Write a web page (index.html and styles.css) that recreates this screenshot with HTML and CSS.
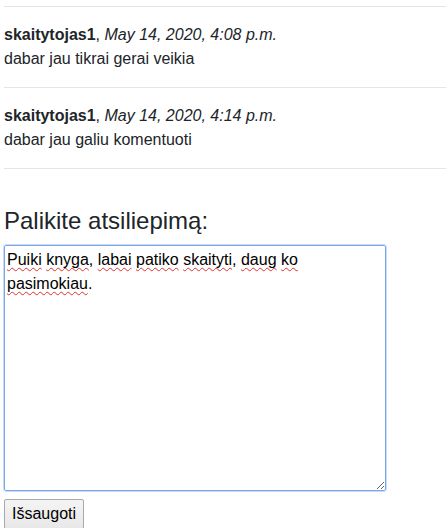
FILE: index.html
```html
<!DOCTYPE html>
<html lang="lt">
<head>
<meta charset="utf-8">
<title>Atsiliepimai</title>
<link rel="stylesheet" href="styles.css">
</head>
<body>
<div class="page">
  <hr class="rule">
  <div class="comment">
    <div class="meta"><strong class="author">skaitytojas1</strong>, <em class="date">May 14, 2020, 4:08 p.m.</em></div>
    <div class="text">dabar jau tikrai gerai veikia</div>
  </div>
  <hr class="rule">
  <div class="comment">
    <div class="meta"><strong class="author">skaitytojas1</strong>, <em class="date">May 14, 2020, 4:14 p.m.</em></div>
    <div class="text">dabar jau galiu komentuoti</div>
  </div>
  <hr class="rule">
  <form class="review">
    <h4 class="review-title">Palikite atsiliepimą:</h4>
    <div class="textbox" contenteditable="true" role="textbox" aria-multiline="true"><span class="typo">Puiki</span> <span class="typo">knyga</span>, <span class="typo">labai</span> <span class="typo">patiko</span> <span class="typo">skaityti</span>, <span class="typo">daug</span> <span class="typo">ko</span> <span class="typo">pasimokiau</span>.</div>
    <button type="button" class="save">Išsaugoti</button>
  </form>
</div>
</body>
</html>
```
FILE: styles.css
```css
html, body {
  margin: 0;
  padding: 0;
  background: #fff;
}
.page {
  font-family: "Liberation Sans", Arial, sans-serif;
  font-size: 16px;
  line-height: 24px;
  color: #212529;
  padding-left: 4px;
  padding-top: 6px;
}
.rule {
  margin: 0;
  border: 0;
  border-top: 1px solid #e5e5e5;
  height: 0;
}
.comment {
  padding: 16px 0;
}
.author {
  font-weight: bold;
}
.date {
  font-style: italic;
}
.review {
  display: flex;
  flex-direction: column;
  align-items: flex-start;
  padding-top: 36px;
}
.review-title {
  margin: 0 0 8px 0;
  font-size: 24px;
  font-weight: 500;
  line-height: 32px;
  color: #212529;
}
.textbox {
  box-sizing: border-box;
  width: 382px;
  height: 246px;
  border: 1px solid #7aa6e8;
  outline: 1px solid #c9dcf7;
  outline-offset: 0;
  border-radius: 2px;
  padding: 2px 2px;
  color: #000;
  font-size: 16px;
  line-height: 24px;
  overflow: auto;
  resize: both;
  background: #fff;
}
.typo {
  text-decoration: underline wavy #e03030;
  text-decoration-thickness: 1px;
  text-underline-offset: 2px;
  text-decoration-skip-ink: none;
}
.save {
  margin-top: 8px;
  font-family: "Liberation Sans", Arial, sans-serif;
  font-size: 16px;
  line-height: 18px;
  padding: 5px 7px;
  color: #000;
  background: linear-gradient(#f4f4f4, #e8e8e8);
  border: 1px solid #a9a9a9;
  border-radius: 2px;
}
```
